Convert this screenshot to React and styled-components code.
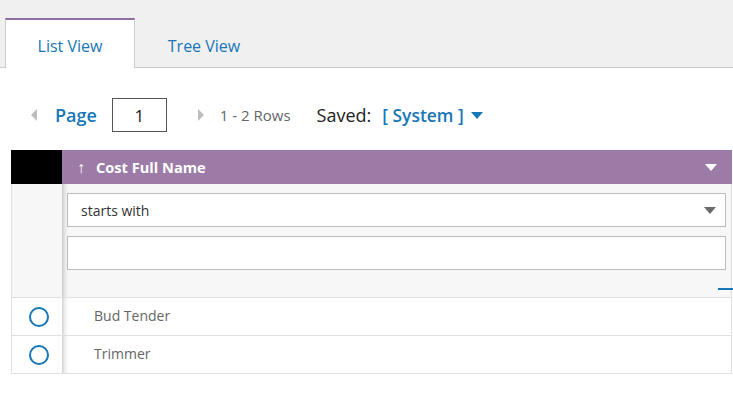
import styled, { createGlobalStyle } from 'styled-components';

const Global = createGlobalStyle`
    body {
        margin: 0;
        background: #FFFFFF;
        font-family: 'Open Sans', 'Liberation Sans', sans-serif;
    }
`;

const BLUE = '#1676B6';

export default function App() {
    const linhas = ['Bud Tender', 'Trimmer'];

    return (
        <>
            <Global />
            <TabBar>
                <Tab ativo>List View</Tab>
                <Tab>Tree View</Tab>
            </TabBar>
            <Pager>
                <Seta esquerda />
                <PageLabel>Page</PageLabel>
                <PageInput defaultValue="1" />
                <Seta />
                <Rows>1 - 2 Rows</Rows>
                <Saved>Saved:</Saved>
                <System>[ System ]</System>
                <Triangulo cor={BLUE} />
            </Pager>
            <Grid>
                <HeaderFixo />
                <Header>
                    <span><Seta2>↑</Seta2>Cost Full Name</span>
                    <Triangulo cor="#FFFFFF" />
                </Header>
                <FiltroFixo />
                <Filtro>
                    <Select>
                        <span>starts with</span>
                        <Triangulo cor="#6A6A6A" />
                    </Select>
                    <Input />
                    <Handle />
                </Filtro>
                {linhas.map(nome => (
                    <Linha key={nome}>
                        <CelulaFixa><Radio /></CelulaFixa>
                        <Celula>{nome}</Celula>
                    </Linha>
                ))}
            </Grid>
        </>
    );
}

const TabBar = styled.div`
    height: 68px;
    padding: 19px 0 0 5px;
    box-sizing: border-box;
    display: flex;
    align-items: flex-end;
    background: #F0F0F0;
    border-bottom: 1px solid #CCCCCC;
`;

const Tab = styled.div`
    width: 130px;
    height: 50px;
    margin-bottom: -1px;
    box-sizing: border-box;
    display: flex;
    justify-content: center;
    align-items: center;
    padding-top: 4px;
    font-size: 16px;
    color: ${BLUE};
    background: ${({ativo}) => ativo ? '#FFFFFF' : 'transparent'};
    border-top: 2px solid ${({ativo}) => ativo ? '#8E6E9E' : 'transparent'};
    border-left: 1px solid ${({ativo}) => ativo ? '#CCCCCC' : 'transparent'};
    border-right: 1px solid ${({ativo}) => ativo ? '#CCCCCC' : 'transparent'};
    margin-left: ${({ativo}) => ativo ? '0' : '4px'};
`;

const Pager = styled.div`
    height: 34px;
    margin-top: 30px;
    padding-left: 28px;
    display: flex;
    align-items: center;
`;

const Seta = styled.span`
    width: 0;
    height: 0;
    border-top: 6px solid transparent;
    border-bottom: 6px solid transparent;
    border-right: ${({esquerda}) => esquerda ? '6px solid #BDBDBD' : 'none'};
    border-left: ${({esquerda}) => esquerda ? 'none' : '6px solid #BDBDBD'};
    margin: ${({esquerda}) => esquerda ? '0 0 0 3px' : '0 0 0 31px'};
`;

const PageLabel = styled.span`
    margin-left: 18px;
    font-size: 18px;
    font-weight: 600;
    color: ${BLUE};
`;

const PageInput = styled.input`
    width: 55px;
    height: 34px;
    margin-left: 15px;
    box-sizing: border-box;
    border: 1px solid #555555;
    text-align: center;
    font-family: inherit;
    font-size: 17px;
    color: #222222;
`;

const Rows = styled.span`
    margin-left: 16px;
    font-size: 15px;
    color: #666666;
`;

const Saved = styled.span`
    margin-left: 26px;
    font-size: 18px;
    color: #222222;
`;

const System = styled.span`
    margin-left: 11px;
    font-size: 17.4px;
    font-weight: 600;
    color: ${BLUE};
`;

const Triangulo = styled.span`
    width: 0;
    height: 0;
    margin-left: 7px;
    border-left: 6px solid transparent;
    border-right: 6px solid transparent;
    border-top: 7px solid ${({cor}) => cor};
`;

const Grid = styled.div`
    width: 721px;
    margin: 18px 0 0 11px;
    display: grid;
    grid-template-columns: 50px 1fr;
    border-right: 1px solid #E0E0E0;
    border-left: 1px solid #E0E0E0;
    box-sizing: border-box;
`;

const HeaderFixo = styled.div`
    height: 34px;
    margin-left: -1px;
    background: #000000;
`;

const Header = styled.div`
    height: 34px;
    padding: 0 15px 0 15px;
    display: flex;
    align-items: center;
    justify-content: space-between;
    font-size: 14.6px;
    font-weight: 700;
    color: #FFFFFF;
    background: #9C7CA7;
    margin-right: -1px;
`;

const Seta2 = styled.span`
    display: inline-block;
    width: 19px;
    font-size: 16px;
`;

const sombra = `
    background-image: linear-gradient(to right, rgba(0, 0, 0, 0.18), rgba(0, 0, 0, 0.06) 3px, rgba(0, 0, 0, 0) 7px);
`;

const FiltroFixo = styled.div`
    background: #F7F7F7;
    border-bottom: 1px solid #E0E0E0;
`;

const Filtro = styled.div`
    height: 114px;
    box-sizing: border-box;
    padding: 9px 5px 0 5px;
    display: flex;
    flex-direction: column;
    gap: 9px;
    position: relative;
    background-color: #F7F7F7;
    ${sombra}
    border-bottom: 1px solid #E0E0E0;
`;

const Select = styled.div`
    height: 34px;
    box-sizing: border-box;
    padding: 0 9px 0 13px;
    display: flex;
    align-items: center;
    justify-content: space-between;
    font-size: 14px;
    color: #333333;
    background: #FFFFFF;
    border: 1px solid #BBBBBB;
`;

const Input = styled.div`
    height: 34px;
    box-sizing: border-box;
    background: #FFFFFF;
    border: 1px solid #BBBBBB;
`;

const Handle = styled.span`
    position: absolute;
    right: -2px;
    bottom: 7px;
    width: 15px;
    height: 2px;
    background: ${BLUE};
`;

const Linha = styled.div`
    display: contents;
`;

const CelulaFixa = styled.div`
    height: 38px;
    display: flex;
    align-items: center;
    justify-content: center;
    padding-left: 4px;
    box-sizing: border-box;
    border-bottom: 1px solid #E0E0E0;
`;

const Celula = styled.div`
    height: 38px;
    box-sizing: border-box;
    padding-left: 32px;
    padding-bottom: 2px;
    display: flex;
    align-items: center;
    font-size: 14px;
    color: #666666;
    background-color: #FFFFFF;
    ${sombra}
    border-bottom: 1px solid #E0E0E0;
`;

const Radio = styled.span`
    width: 20px;
    height: 20px;
    box-sizing: border-box;
    border-radius: 50%;
    border: 2px solid ${BLUE};
`;
